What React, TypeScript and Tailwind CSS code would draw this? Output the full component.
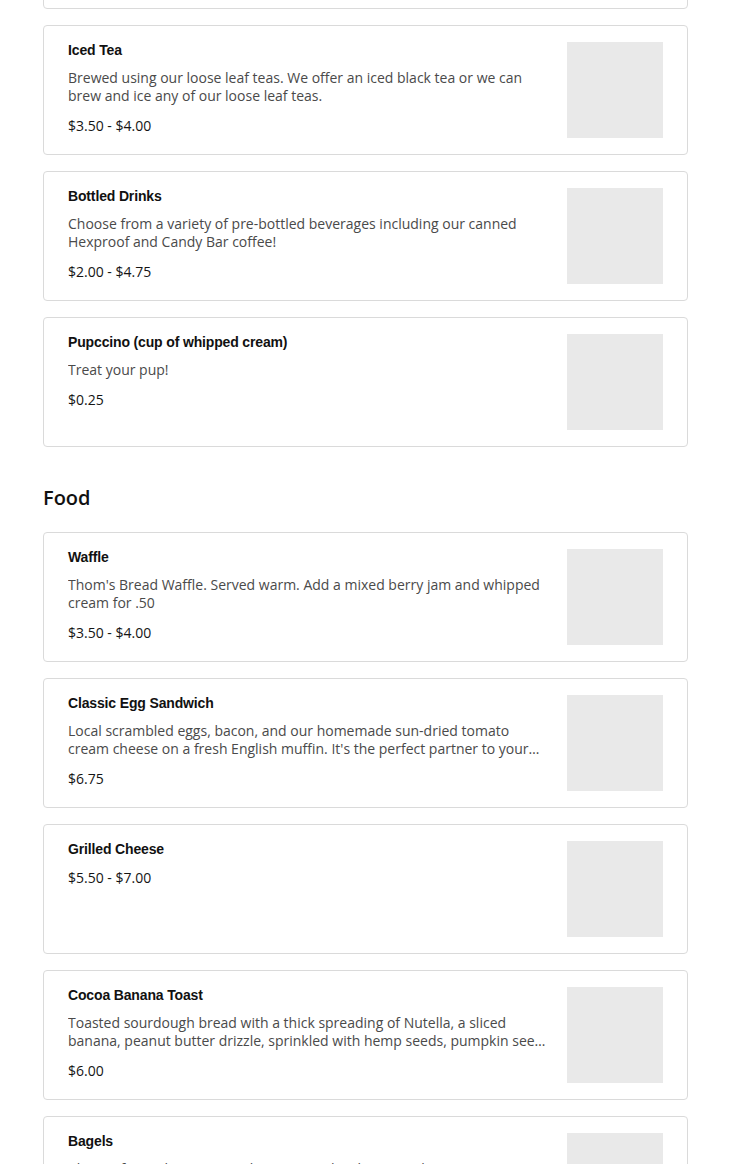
import React from 'react';

interface Item {
  name: string;
  description?: string;
  price: string;
}

const DRINKS: Item[] = [
  { name: 'Cold Brew', description: 'Slow steeped for 18 hours.', price: '$3.50 - $4.50' },
  {
    name: 'Iced Tea',
    description: 'Brewed using our loose leaf teas. We offer an iced black tea or we can brew and ice any of our loose leaf teas.',
    price: '$3.50 - $4.00',
  },
  {
    name: 'Bottled Drinks',
    description: 'Choose from a variety of pre-bottled beverages including our canned Hexproof and Candy Bar coffee!',
    price: '$2.00 - $4.75',
  },
  { name: 'Pupccino (cup of whipped cream)', description: 'Treat your pup!', price: '$0.25' },
];

const FOOD: Item[] = [
  {
    name: 'Waffle',
    description: "Thom's Bread Waffle. Served warm. Add a mixed berry jam and whipped cream for .50",
    price: '$3.50 - $4.00',
  },
  {
    name: 'Classic Egg Sandwich',
    description:
      "Local scrambled eggs, bacon, and our homemade sun-dried tomato cream cheese on a fresh English muffin. It's the perfect partner to your morning coffee.",
    price: '$6.75',
  },
  { name: 'Grilled Cheese', price: '$5.50 - $7.00' },
  {
    name: 'Cocoa Banana Toast',
    description:
      'Toasted sourdough bread with a thick spreading of Nutella, a sliced banana, peanut butter drizzle, sprinkled with hemp seeds, pumpkin seeds and cinnamon.',
    price: '$6.00',
  },
  { name: 'Bagels', description: 'Choose from plain or everything, toasted with cream cheese.', price: '$3.00' },
];

function ItemCard({ item }: { item: Item }) {
  return (
    <div className="flex gap-4 rounded-[4px] border border-[#dadada] bg-white pl-6 pr-6 py-4">
      <div className="min-w-0 flex-1">
        <h3 className="font-['Liberation_Sans',Arial,sans-serif] text-[14px] font-bold leading-[16px] tracking-[-0.15px] text-[#111]">
          {item.name}
        </h3>
        {item.description && (
          <p className="mt-[11px] line-clamp-2 text-[14px] leading-[18px] text-[#4a4a4a]">{item.description}</p>
        )}
        <p className="mt-3 text-[14px] leading-[18px] text-[#151515]">{item.price}</p>
      </div>
      <div className="h-24 w-24 shrink-0 bg-[#e9e9e9]" />
    </div>
  );
}

export default function App() {
  return (
    <div className="min-h-screen overflow-hidden bg-white font-['Open_Sans',sans-serif]">
      <div className="-mt-[121px] pl-[43px] pr-[42px]">
        <div className="flex flex-col gap-4">
          {DRINKS.map(item => (
            <ItemCard key={item.name} item={item} />
          ))}
        </div>

        <h2 className="mt-[37px] mb-5 text-[20px] font-semibold leading-[28px] text-[#111]">Food</h2>

        <div className="flex flex-col gap-4">
          {FOOD.map(item => (
            <ItemCard key={item.name} item={item} />
          ))}
        </div>
      </div>
    </div>
  );
}
